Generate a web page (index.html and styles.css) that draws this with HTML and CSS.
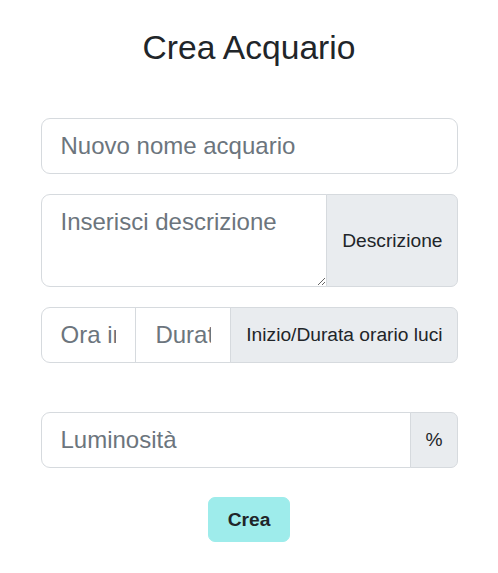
FILE: index.html
```html
<!DOCTYPE html>
<html lang="it">
<head>
<meta charset="utf-8">
<title>Crea Acquario</title>
<link rel="stylesheet" href="styles.css">
</head>
<body>
<main class="container">
  <h3 class="title">Crea Acquario</h3>
  <form class="form">
    <div class="row">
      <input class="control lg solo" type="text" placeholder="Nuovo nome acquario">
    </div>
    <div class="row group">
      <textarea class="control lg field first area" placeholder="Inserisci descrizione"></textarea>
      <span class="addon last">Descrizione</span>
    </div>
    <div class="row group">
      <input class="control lg field first" type="text" placeholder="Ora inizio">
      <input class="control lg field mid" type="text" placeholder="Durata">
      <span class="addon last">Inizio/Durata orario luci</span>
    </div>
    <div class="row group spaced">
      <input class="control lg field first" type="text" placeholder="Luminosità">
      <span class="addon last narrow">%</span>
    </div>
    <div class="actions">
      <button class="btn" type="button">Crea</button>
    </div>
  </form>
</main>
</body>
</html>
```

FILE: styles.css
```css
* { box-sizing: border-box; }

body {
  margin: 0;
  background: #ffffff;
  font-family: "Liberation Sans", Arial, sans-serif;
  color: #212529;
}

.container {
  width: 417px;
  margin: 0 auto;
  padding-top: 28px;
}

.title {
  margin: 0 0 50px;
  font-size: 33.6px;
  font-weight: 400;
  line-height: 40px;
  text-align: center;
  color: #212529;
}

.row {
  margin-bottom: 20px;
}

.row.spaced {
  margin-top: 49px;
  margin-bottom: 0;
}

.group {
  display: flex;
  align-items: stretch;
}

.control {
  display: block;
  margin: 0;
  font-family: "Liberation Sans", Arial, sans-serif;
  color: #212529;
  background: #ffffff;
  border: 1px solid #d6dade;
  outline: none;
}

.control.lg {
  height: 56px;
  padding: 8px 19px;
  font-size: 24px;
  line-height: 36px;
}

.control::placeholder {
  color: #6c757d;
  opacity: 1;
}

.solo {
  width: 100%;
  border-radius: 9px;
}

.field {
  flex: 1 1 auto;
  width: 1%;
  min-width: 0;
}

.first {
  border-radius: 9px 0 0 9px;
}

.mid {
  margin-left: -1px;
  border-radius: 0;
}

.control.area {
  height: 93px;
  padding-top: 9px;
  resize: vertical;
}

.addon {
  display: flex;
  align-items: center;
  margin-left: -1px;
  padding: 0 14px 0 15px;
  font-size: 19.2px;
  line-height: 28px;
  white-space: nowrap;
  color: #212529;
  background: #e9ecef;
  border: 1px solid #d6dade;
}

.addon.narrow {
  padding: 0 14px;
}

.last {
  border-radius: 0 7px 7px 0;
}

.actions {
  display: flex;
  justify-content: center;
  margin-top: 29px;
}

.btn {
  height: 45px;
  padding: 0 19px;
  font-family: "Liberation Sans", Arial, sans-serif;
  font-size: 19.2px;
  font-weight: 700;
  color: #212529;
  background: #9eeceb;
  border: 1px solid #9eeceb;
  border-radius: 7px;
  cursor: pointer;
}
```
